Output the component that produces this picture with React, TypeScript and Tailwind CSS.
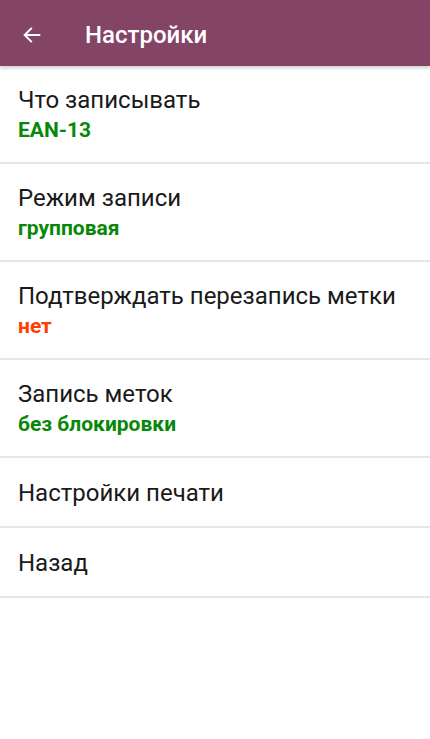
import React from 'react';

interface SettingItem {
  title: string;
  value?: string;
  tone?: 'green' | 'red';
}

const items: SettingItem[] = [
  { title: 'Что записывать', value: 'EAN-13', tone: 'green' },
  { title: 'Режим записи', value: 'групповая', tone: 'green' },
  { title: 'Подтверждать перезапись метки', value: 'нет', tone: 'red' },
  { title: 'Запись меток', value: 'без блокировки', tone: 'green' },
  { title: 'Настройки печати' },
  { title: 'Назад' },
];

export default function App() {
  return (
    <div className="min-h-[739px] w-full bg-white font-['Roboto',sans-serif]">
      <header className="relative z-10 flex h-[66px] items-center bg-[#834466] pt-[3px] shadow-[0_2px_4px_rgba(0,0,0,0.2)]">
        <button className="ml-[20px] flex h-[24px] w-[24px] items-center justify-center text-white">
          <svg width="22" height="22" viewBox="0 0 24 24" fill="none">
            <path d="M20 12H4.5M11 5l-7 7 7 7" stroke="currentColor" strokeWidth="2.2" strokeLinecap="square" />
          </svg>
        </button>
        <h1 className="ml-[41px] text-[24px] font-medium text-white">Настройки</h1>
      </header>

      <div className="flex flex-col">
        {items.map((item) => (
          <div
            key={item.title}
            className={`flex flex-col justify-center border-b-2 border-[#e6e6e6] px-[18px] ${
              item.value ? 'h-[98px] pt-[1px]' : 'h-[70px] pt-[1px]'
            }`}
          >
            <div className="text-[24px] leading-[28px] text-[#1a1a1a]">{item.title}</div>
            {item.value && (
              <div
                className={`mt-[3px] text-[21px] font-bold leading-[26px] ${
                  item.tone === 'red' ? 'text-[#ff3d00]' : 'text-[#088808]'
                }`}
              >
                {item.value}
              </div>
            )}
          </div>
        ))}
      </div>
    </div>
  );
}
